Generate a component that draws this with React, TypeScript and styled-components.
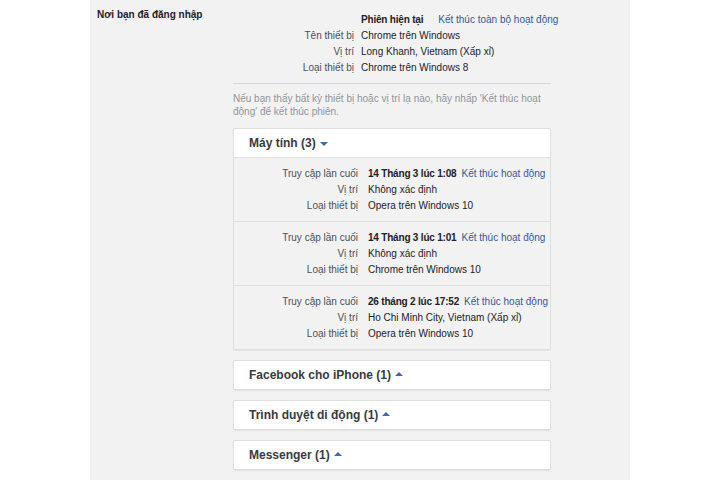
import React, {FC} from 'react';
import styled, {createGlobalStyle} from "styled-components";

const GlobalStyle = createGlobalStyle`
  body {
    margin: 0;
    background: #fff;
    font-family: "Liberation Sans", Arial, sans-serif;
    font-size: 10px;
    color: #1d2129;
  }
`

type Session = {
    when: string
    place: string
    device: string
}

const sessions: Session[] = [
    {when: '14 Tháng 3 lúc 1:08', place: 'Không xác định', device: 'Opera trên Windows 10'},
    {when: '14 Tháng 3 lúc 1:01', place: 'Không xác định', device: 'Chrome trên Windows 10'},
    {when: '26 tháng 2 lúc 17:52', place: 'Ho Chi Minh City, Vietnam (Xấp xỉ)', device: 'Opera trên Windows 10'},
]

const groups = ['Facebook cho iPhone (1)', 'Trình duyệt di động (1)', 'Messenger (1)']

const Caret: FC<{ up?: boolean }> = ({up}) => (
    <CaretIcon width="8" height="4" viewBox="0 0 8 4" $up={up}>
        <path d="M0 0h8L4 4z" fill="#4267b2"/>
    </CaretIcon>
)

const App: FC = () => {
    return (
        <>
            <GlobalStyle/>
            <Panel>
                <SectionTitle>Nơi bạn đã đăng nhập</SectionTitle>
                <Content>
                    <InfoTable>
                        <span/>
                        <InfoValue>
                            <Strong>Phiên hiện tại</Strong>
                            <Link>Kết thúc toàn bộ hoạt động</Link>
                        </InfoValue>
                        <InfoLabel>Tên thiết bị</InfoLabel>
                        <InfoValue>Chrome trên Windows</InfoValue>
                        <InfoLabel>Vị trí</InfoLabel>
                        <InfoValue>Long Khanh, Vietnam (Xấp xỉ)</InfoValue>
                        <InfoLabel>Loại thiết bị</InfoLabel>
                        <InfoValue>Chrome trên Windows 8</InfoValue>
                    </InfoTable>
                    <Divider/>
                    <Notice>
                        Nếu bạn thấy bất kỳ thiết bị hoặc vị trí lạ nào, hãy nhấp 'Kết thúc hoạt
                        động' để kết thúc phiên.
                    </Notice>
                    <Card>
                        <CardHeader>Máy tính (3) <Caret/></CardHeader>
                        {sessions.map(s => (
                            <Entry key={s.when}>
                                <EntryLabel>Truy cập lần cuối</EntryLabel>
                                <EntryValue>
                                    <Strong>{s.when}</Strong>
                                    <Link $gap={5}>Kết thúc hoạt động</Link>
                                </EntryValue>
                                <EntryLabel>Vị trí</EntryLabel>
                                <EntryValue>{s.place}</EntryValue>
                                <EntryLabel>Loại thiết bị</EntryLabel>
                                <EntryValue>{s.device}</EntryValue>
                            </Entry>
                        ))}
                    </Card>
                    {groups.map(g => (
                        <Card key={g}>
                            <CardHeader>{g} <Caret up/></CardHeader>
                        </Card>
                    ))}
                    <Card/>
                </Content>
            </Panel>
        </>
    );
};

const Panel = styled.div`
  margin-left: 90px;
  width: 540px;
  height: 480px;
  overflow: hidden;
  background: #f2f2f2;
  display: grid;
  grid-template-columns: 143px 318px;
  align-items: start;
`

const SectionTitle = styled.div`
  padding: 9px 0 0 7px;
  font-size: 10px;
  font-weight: bold;
  color: #1d2129;
`

const Content = styled.div`
  padding-top: 12px;
  display: flex;
  flex-direction: column;
`

const InfoTable = styled.div`
  display: grid;
  grid-template-columns: 121px 1fr;
  column-gap: 7px;
  line-height: 16px;
`

const InfoLabel = styled.div`
  text-align: right;
  color: #4b4f56;
`

const InfoValue = styled.div`
  color: #1d2129;
  white-space: nowrap;
`

const Strong = styled.span`
  font-weight: bold;
  letter-spacing: -0.2px;
  color: #1d2129;
`

const Link = styled.span<{ $gap?: number }>`
  color: #365899;
  margin-left: ${p => p.$gap ?? 15}px;
`

const Divider = styled.div`
  height: 1px;
  background: #d3d6db;
  margin-top: 7px;
`

const Notice = styled.p`
  margin: 8px 0 0;
  color: #90949c;
  line-height: 13px;
`

const Card = styled.div`
  margin-top: 10px;
  background: #fff;
  border: 1px solid #dddfe2;
  border-radius: 2px;
  box-shadow: 0 1px 1px rgba(0, 0, 0, 0.06);
  min-height: 28px;

  &:nth-of-type(1) {
    margin-top: 16px;
  }
`

const CardHeader = styled.div`
  height: 28px;
  display: flex;
  align-items: center;
  gap: 4px;
  padding-left: 15px;
  font-size: 12px;
  font-weight: bold;
  color: #373a40;
`

const CaretIcon = styled.svg<{ $up?: boolean }>`
  margin-top: ${p => p.$up ? '-2px' : '2px'};
  transform: ${p => p.$up ? 'rotate(180deg)' : 'none'};
`

const Entry = styled.div`
  display: grid;
  grid-template-columns: 124px 1fr;
  column-gap: 10px;
  line-height: 16px;
  padding: 8px 0 7px;
  background: #f2f2f2;
  border-top: 1px solid #dddfe2;
`

const EntryLabel = styled.div`
  text-align: right;
  color: #4b4f56;
`

const EntryValue = styled.div`
  color: #1d2129;
  white-space: nowrap;
`

export default App;
